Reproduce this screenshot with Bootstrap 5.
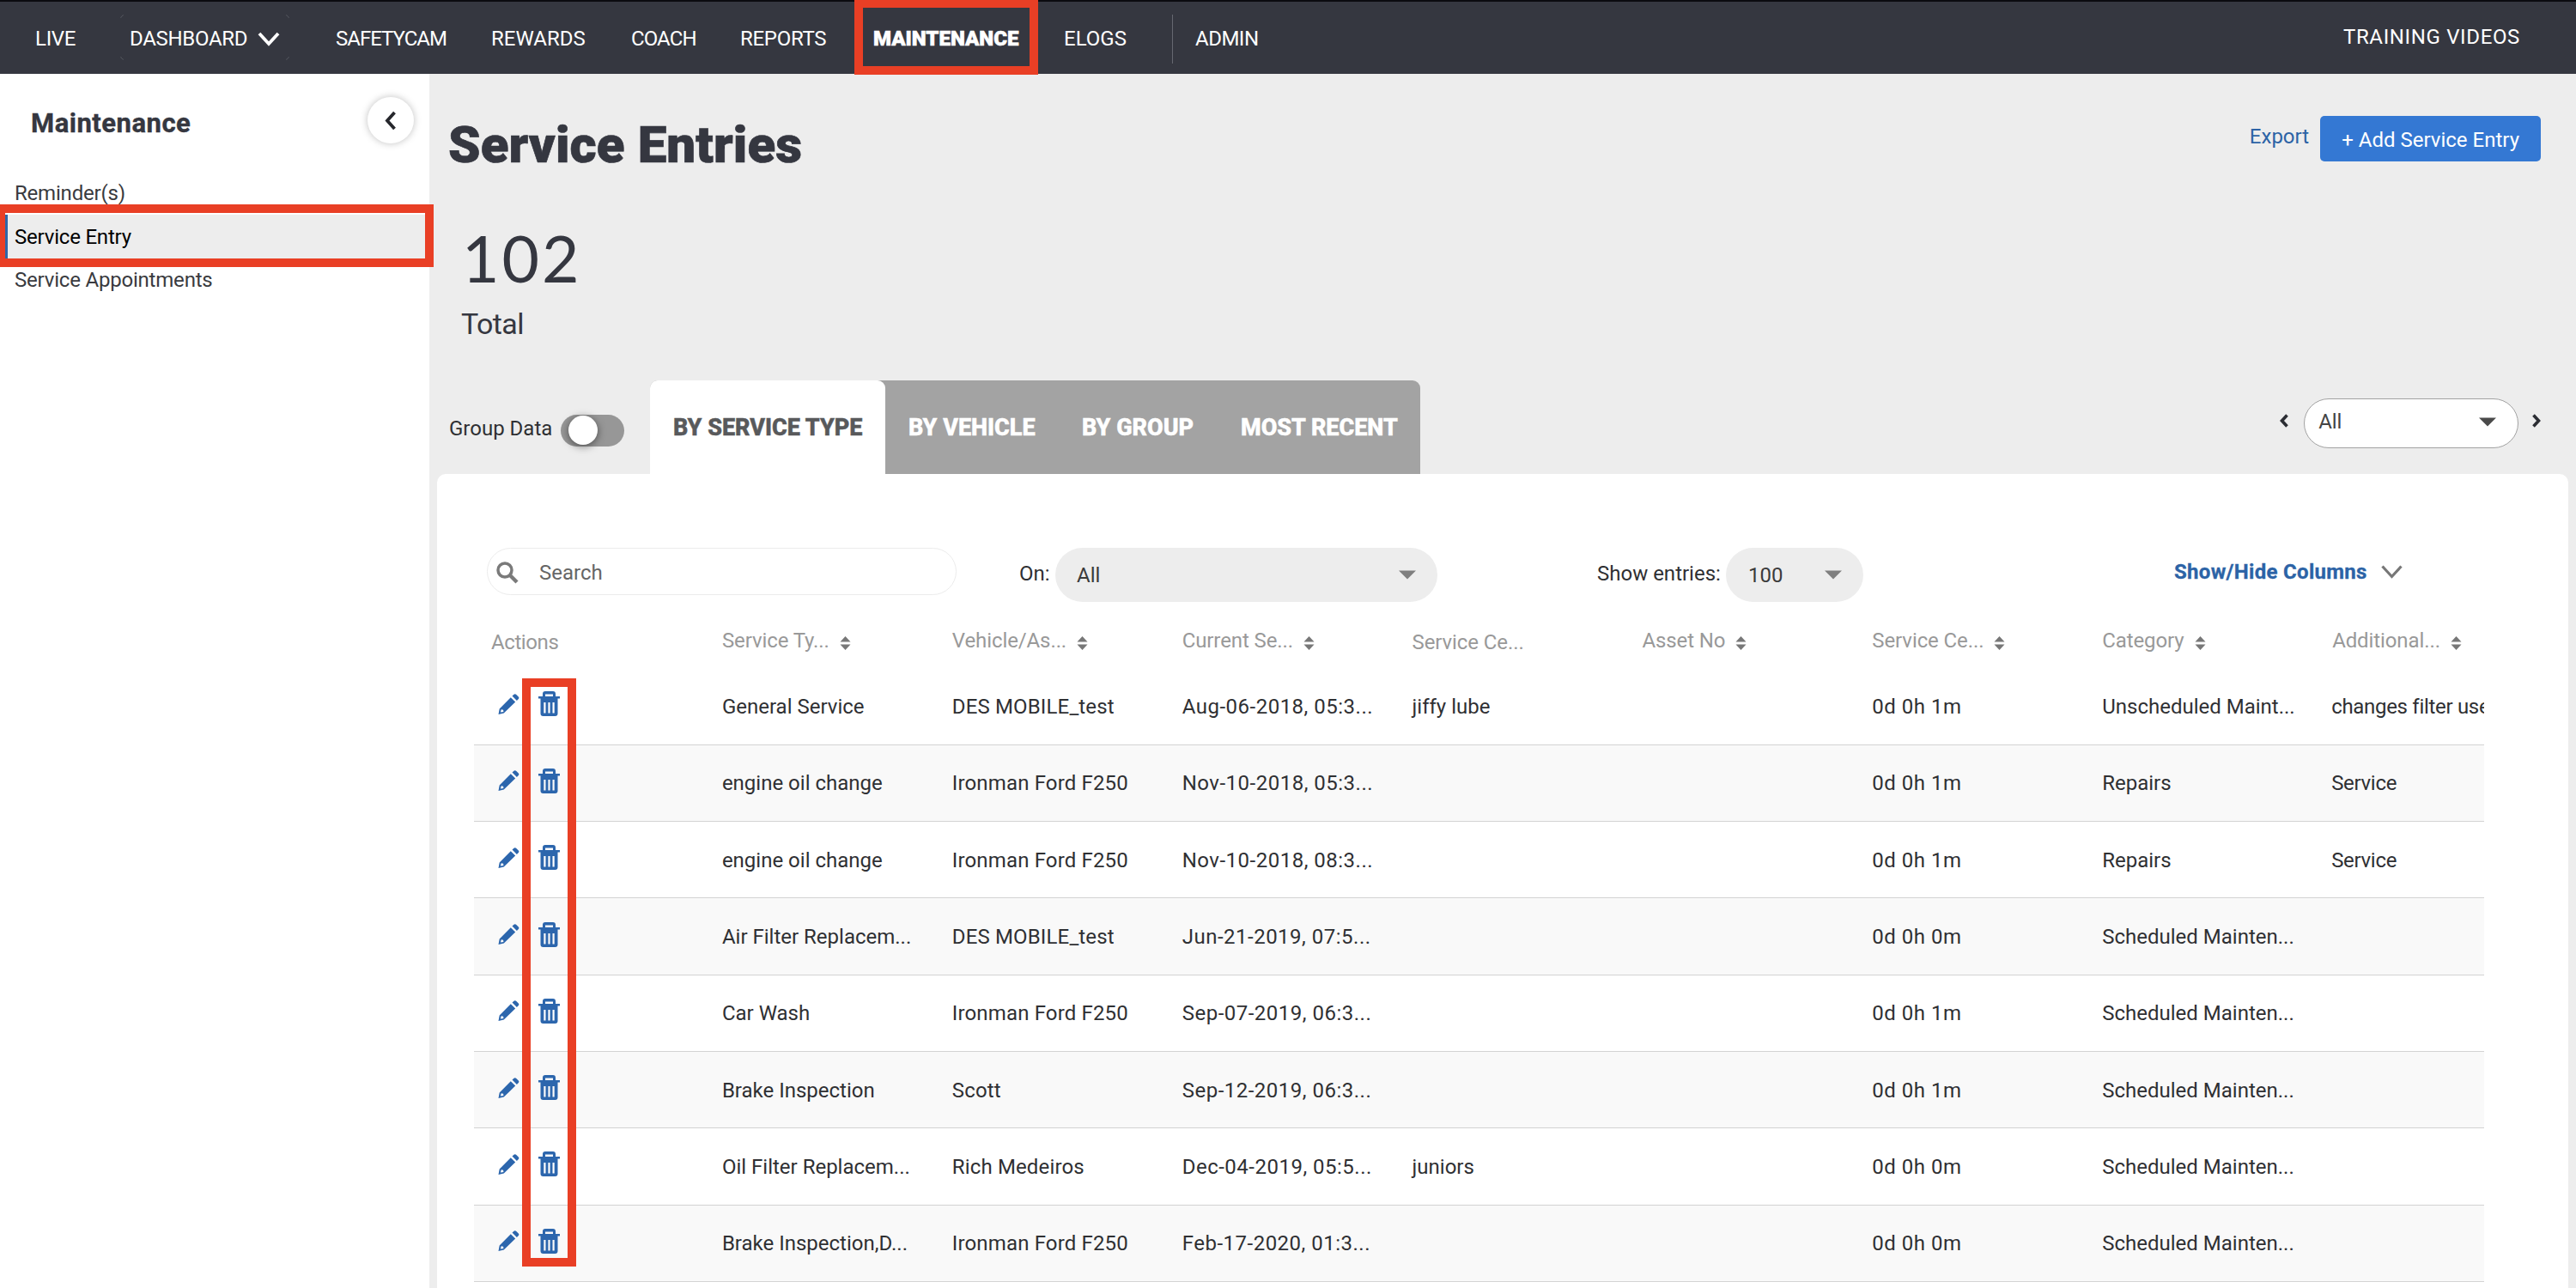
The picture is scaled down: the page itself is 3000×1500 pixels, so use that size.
<!DOCTYPE html>
<html lang="en">
<head>
<meta charset="utf-8">
<title>Service Entries</title>
<link href="https://cdn.jsdelivr.net/npm/bootstrap@5.3.0/dist/css/bootstrap.min.css" rel="stylesheet">
<style>
body{font-family:Roboto,"Liberation Sans",sans-serif;font-size:24px;line-height:30px;color:#2f3033;background:#ededed;width:3000px;height:1500px;overflow:hidden}
a{color:inherit;text-decoration:none}
svg{display:block;flex:none}
/* top navigation */
.topbar{height:86px;background:#353740;border-top:2px solid #0b0b10;color:#fff;padding:2px 0 0 41px}
.topbar .nav-item{white-space:nowrap}
.n1{width:110px;letter-spacing:-.3px}.n2{width:240px;letter-spacing:-.3px}.n3{width:181px;letter-spacing:-1px}.n4{width:163px}.n5{width:127px;letter-spacing:-.9px}.n6{width:155px;letter-spacing:-.3px}.n7{width:222px;font-weight:900;-webkit-text-stroke:.6px #fff}.n8{width:126px}.n9{letter-spacing:-.5px}
.n2 svg{margin-right:65px}
.vline{width:1px;height:57px;background:#666870;margin-right:26px}
.training{margin-right:65px;padding-bottom:4px;letter-spacing:.65px}
.dashfocus{position:absolute;left:140px;top:17px;width:197px;height:53px;border:1px solid #55575f;border-radius:5px;clip-path:polygon(0 0,4px 0,4px 4px,193px 4px,193px 0,100% 0,100% 4px,193px 4px,193px 49px,100% 49px,100% 100%,193px 100%,193px 49px,4px 49px,4px 100%,0 100%,0 49px,4px 49px,4px 4px,0 4px)}
/* highlight frames */
.redbox{position:absolute;border:10px solid #e93f25;pointer-events:none;z-index:5}
.rb-nav{left:995px;top:0;width:214px;height:87px;border-top-width:9px}
.rb-side{left:0;top:238px;width:505px;height:73px;border-left-width:6px}
.rb-trash{left:608px;top:790px;width:63px;height:685px}
/* sidebar */
.sidebar{width:500px;height:1414px;background:#fff}
.side-head{height:113px;padding:0 18px 0 36px}
.side-title{font-size:31px;font-weight:700;color:#353740;margin-top:3px;letter-spacing:.5px;-webkit-text-stroke:.4px #353740}
.collapse-btn{width:54px;height:54px;border-radius:50%;background:#fff;box-shadow:0 0 8px rgba(0,0,0,.25);margin-top:-5px}
.collapse-btn svg{margin-right:2px}
.side-link{height:51px;padding-left:17px;color:#3a3b40;letter-spacing:-.2px}
.side-link.on{background:#ededed;color:#000;border-left:9px solid #2f66a8;padding-left:8px}
.side-link:last-child{height:50px}
/* page head */
.main{padding:0 9px}
.page-head{height:176px;padding:48px 32px 0 13px}
.page-title{font-size:60px;line-height:70px;font-weight:900;color:#353740;letter-spacing:.1px;-webkit-text-stroke:.7px #353740}
.export{color:#2c63a6;margin-right:13px;line-height:48px}
.add-btn{width:257px;height:53px;border-radius:5px;background:#3478d3;border:0;color:#fff;font-size:24px;line-height:30px;padding:3px 0 0}
.head-tools{margin-top:1px}
.stat{height:181px;padding-left:28px}
.bignum{font-family:Lato,sans-serif;font-size:75px;line-height:76px;color:#353740;margin-left:1px;letter-spacing:3px}
.total{font-size:34px;line-height:42px;color:#353740;margin-top:18px;letter-spacing:-.6px}
/* tab row */
.tabrow{height:109px;padding:0 32px 0 14px}
.gd{width:130px;padding-top:41px;white-space:nowrap}
.toggle-sw{width:74px;height:37px;border-radius:19px;background:#979797;padding:1px 0 0 9px;margin:40px 30px 0 0}
.toggle-sw i{display:block;width:34px;height:34px;border-radius:50%;background:#fff;box-shadow:0 2px 10px rgba(0,0,0,.5)}
.tabs{height:109px;background:#a3a3a3;border-radius:9px 9px 0 0;font-size:27px;font-weight:800;color:#fff;width:897px;-webkit-text-stroke:.5px currentColor}
.tabs div{padding-left:27px;white-space:nowrap}
.tabs .t1{width:274px;background:#fff;color:#58595b;border-radius:9px 9px 0 0;height:109px}
.t2{width:202px}.t3{width:185px}
.pager{width:250px;height:58px;border-radius:29px;border:1.500px solid #a2a2a2;background:#fff;color:#444;padding:0 25px 4px 16px;margin:0 16px 0 18px}
.pager-row{margin-top:21px;height:58px}
.pager-row>svg{margin-bottom:6px}
/* panel */
.panel{background:#fff;border-radius:10px 10px 0 0;height:948px;padding:86px 98px 0 43px}
.filters{height:63px;padding-left:15px;margin-right:-30px}
.searchbox{width:547px;height:55px;border:1.500px solid #ececec;border-radius:28px;color:#666;padding:2px 0 0 10px}
.searchbox span{margin-left:24px}
.pill{height:63px;border-radius:32px;background:#ededed;padding:0 25px;color:#3b3b3b}
.pill svg{color:#7f7f7f}
.pager svg{color:#4a4a4a}
.on-label{width:42px;margin:15px 0 0 73px}
.show-label{width:150px;margin:15px 0 0 186px;white-space:nowrap}
.w-on{width:445px}.w-show{width:160px;padding-left:26px}
.cols-link{font-weight:700;color:#2c63a6;margin:13px 0 0 362px;letter-spacing:.3px;white-space:nowrap;-webkit-text-stroke:.3px #2c63a6}
table.entries{table-layout:fixed;width:2341px;margin:0;line-height:30px}
.entries th{height:77px;padding:12px 0 0 21px;font-weight:400;color:#999;white-space:nowrap;vertical-align:middle;border:0;background:#fff;width:267.900px;letter-spacing:-.1px}
.entries th:last-child{width:198px}
.entries th svg{margin:6px 0 0 12px}
.entries .plain{padding-top:17px}
.entries .plain:first-child{padding-left:20px;letter-spacing:-.4px}
.entries td{height:89.300px;padding:1px 0 0 21px;white-space:nowrap;overflow:hidden;vertical-align:middle;border-bottom:1px solid #d3d3d3;color:#2f3033;background:#fff}
.entries td:nth-child(3){letter-spacing:.15px}
.entries td:nth-child(4),.entries td:nth-child(7){letter-spacing:.5px}
.entries td:last-child{padding-left:20px;letter-spacing:-.3px}
.entries tbody tr:nth-child(even) td{background:#f9f9f9}
.acts{color:#2c66ad;padding:0 0 6px 7px;gap:22px}
</style>
</head>
<body class="position-relative">
<svg width="0" height="0" class="position-absolute">
<symbol id="pen" viewBox="0 0 24 24"><path fill="currentColor" fill-rule="evenodd" d="M14.300 4.200l5.400 5.400L6.300 22.600 0 24l1.200-6.500zM3.200 18.200l-.8 3.400 3.500-.7-.3-2.100zM16 2.600l1.700-1.700a2.200 2.200 0 0 1 3.100 0l2.300 2.300a2.200 2.200 0 0 1 0 3.100L21.400 8z"/></symbol>
<symbol id="bin" viewBox="0 0 25 29"><path fill="currentColor" fill-rule="evenodd" d="M0 6h5V3q0-3 3-3h9q3 0 3 3v3h5v2.500h-2.500V26q0 3-3 3h-14q-3 0-3-3V8.500H0zM8 6h9V3.500H8zM6.300 13v12.500h2.200V13zm5.100 0v12.500h2.200V13zm5.100 0v12.500h2.200V13z"/></symbol>
<symbol id="sort" viewBox="0 0 13 16"><path fill="#777" d="M6.500 0L12.500 6.500H.5zM6.500 16L.5 9.500h12z"/></symbol>
<symbol id="caret" viewBox="0 0 20 10"><path fill="currentColor" d="M0 0h20L10 10z"/></symbol>
</svg>

<nav class="topbar d-flex align-items-center">
<div class="nav-item n1">LIVE</div>
<div class="nav-item n2 d-flex align-items-center"><span>DASHBOARD</span><svg class="ms-auto" width="26" height="17" viewBox="0 0 26 17"><path d="M2 2l11 12L24 2" fill="none" stroke="#fff" stroke-width="3.800"/></svg></div>
<div class="nav-item n3">SAFETYCAM</div>
<div class="nav-item n4">REWARDS</div>
<div class="nav-item n5">COACH</div>
<div class="nav-item n6">REPORTS</div>
<div class="nav-item n7">MAINTENANCE</div>
<div class="nav-item n8">ELOGS</div>
<div class="vline"></div>
<div class="nav-item n9">ADMIN</div>
<div class="nav-item training ms-auto">TRAINING VIDEOS</div>
</nav>

<div class="d-flex">
<aside class="sidebar flex-shrink-0">
<div class="side-head d-flex align-items-center justify-content-between">
<div class="side-title">Maintenance</div>
<div class="collapse-btn d-flex align-items-center justify-content-center"><svg width="15" height="23" viewBox="0 0 15 23"><path d="M12.500 2L4 11.500l8.500 9.500" fill="none" stroke="#26272c" stroke-width="3.800"/></svg></div>
</div>
<a class="side-link d-flex align-items-center">Reminder(s)</a>
<a class="side-link on d-flex align-items-center">Service Entry</a>
<a class="side-link d-flex align-items-center">Service Appointments</a>
</aside>

<main class="main flex-grow-1">
<header class="page-head d-flex justify-content-between align-items-start">
<h1 class="page-title mb-0">Service Entries</h1>
<div class="head-tools d-flex align-items-start"><a class="export">Export</a><button class="btn add-btn">+ Add Service Entry</button></div>
</header>
<div class="stat"><div class="bignum">102</div><div class="total">Total</div></div>
<div class="tabrow d-flex align-items-start">
<div class="gd">Group Data</div>
<div class="toggle-sw"><i></i></div>
<div class="tabs d-flex align-items-center"><div class="t1 d-flex align-items-center">BY SERVICE TYPE</div><div class="t2">BY VEHICLE</div><div class="t3">BY GROUP</div><div>MOST RECENT</div></div>
<div class="pager-row d-flex align-items-center ms-auto">
<svg width="10" height="16" viewBox="0 0 10 16"><path d="M8.500 1.500L2.500 8l6 6.500" fill="none" stroke="#2b2d33" stroke-width="3.600"/></svg>
<div class="pager d-flex align-items-center justify-content-between"><span>All</span><svg width="20" height="11"><use href="#caret"/></svg></div>
<svg width="10" height="16" viewBox="0 0 10 16"><path d="M1.500 1.500L7.500 8l-6 6.500" fill="none" stroke="#2b2d33" stroke-width="3.600"/></svg>
</div>
</div>

<section class="panel">
<div class="filters d-flex align-items-start">
<div class="searchbox d-flex align-items-center"><svg width="26" height="26" viewBox="0 0 26 26"><circle cx="10" cy="10" r="8" fill="none" stroke="#7a7a7a" stroke-width="3.500"/><path d="M16 16l8 8" stroke="#7a7a7a" stroke-width="4.500"/></svg><span>Search</span></div>
<div class="on-label">On:</div>
<div class="pill w-on d-flex align-items-center justify-content-between"><span>All</span><svg width="20" height="11"><use href="#caret"/></svg></div>
<div class="show-label">Show entries:</div>
<div class="pill w-show d-flex align-items-center justify-content-between"><span>100</span><svg width="20" height="11"><use href="#caret"/></svg></div>
<a class="cols-link d-flex align-items-center">Show/Hide Columns<svg class="ms-3" width="25" height="16" viewBox="0 0 25 16"><path d="M1.500 1.500l11 12 11-12" fill="none" stroke="#777" stroke-width="3.200"/></svg></a>
</div>

<table class="table entries">
<thead><tr>
<th class="plain">Actions</th>
<th><div class="d-flex align-items-center">Service Ty...<svg width="13" height="16"><use href="#sort"/></svg></div></th>
<th><div class="d-flex align-items-center">Vehicle/As...<svg width="13" height="16"><use href="#sort"/></svg></div></th>
<th><div class="d-flex align-items-center">Current Se...<svg width="13" height="16"><use href="#sort"/></svg></div></th>
<th class="plain">Service Ce...</th>
<th><div class="d-flex align-items-center">Asset No<svg width="13" height="16"><use href="#sort"/></svg></div></th>
<th><div class="d-flex align-items-center">Service Ce...<svg width="13" height="16"><use href="#sort"/></svg></div></th>
<th><div class="d-flex align-items-center">Category<svg width="13" height="16"><use href="#sort"/></svg></div></th>
<th><div class="d-flex align-items-center">Additional...<svg width="13" height="16"><use href="#sort"/></svg></div></th>
</tr></thead>
<tbody>
<tr><td><div class="acts d-flex align-items-center"><svg width="25" height="24"><use href="#pen"/></svg><svg width="25" height="29"><use href="#bin"/></svg></div></td><td>General Service</td><td>DES MOBILE_test</td><td>Aug-06-2018, 05:3...</td><td>jiffy lube</td><td></td><td>0d 0h 1m</td><td>Unscheduled Maint...</td><td>changes filter use</td></tr>
<tr><td><div class="acts d-flex align-items-center"><svg width="25" height="24"><use href="#pen"/></svg><svg width="25" height="29"><use href="#bin"/></svg></div></td><td>engine oil change</td><td>Ironman Ford F250</td><td>Nov-10-2018, 05:3...</td><td></td><td></td><td>0d 0h 1m</td><td>Repairs</td><td>Service</td></tr>
<tr><td><div class="acts d-flex align-items-center"><svg width="25" height="24"><use href="#pen"/></svg><svg width="25" height="29"><use href="#bin"/></svg></div></td><td>engine oil change</td><td>Ironman Ford F250</td><td>Nov-10-2018, 08:3...</td><td></td><td></td><td>0d 0h 1m</td><td>Repairs</td><td>Service</td></tr>
<tr><td><div class="acts d-flex align-items-center"><svg width="25" height="24"><use href="#pen"/></svg><svg width="25" height="29"><use href="#bin"/></svg></div></td><td>Air Filter Replacem...</td><td>DES MOBILE_test</td><td>Jun-21-2019, 07:5...</td><td></td><td></td><td>0d 0h 0m</td><td>Scheduled Mainten...</td><td></td></tr>
<tr><td><div class="acts d-flex align-items-center"><svg width="25" height="24"><use href="#pen"/></svg><svg width="25" height="29"><use href="#bin"/></svg></div></td><td>Car Wash</td><td>Ironman Ford F250</td><td>Sep-07-2019, 06:3...</td><td></td><td></td><td>0d 0h 1m</td><td>Scheduled Mainten...</td><td></td></tr>
<tr><td><div class="acts d-flex align-items-center"><svg width="25" height="24"><use href="#pen"/></svg><svg width="25" height="29"><use href="#bin"/></svg></div></td><td>Brake Inspection</td><td>Scott</td><td>Sep-12-2019, 06:3...</td><td></td><td></td><td>0d 0h 1m</td><td>Scheduled Mainten...</td><td></td></tr>
<tr><td><div class="acts d-flex align-items-center"><svg width="25" height="24"><use href="#pen"/></svg><svg width="25" height="29"><use href="#bin"/></svg></div></td><td>Oil Filter Replacem...</td><td>Rich Medeiros</td><td>Dec-04-2019, 05:5...</td><td>juniors</td><td></td><td>0d 0h 0m</td><td>Scheduled Mainten...</td><td></td></tr>
<tr><td><div class="acts d-flex align-items-center"><svg width="25" height="24"><use href="#pen"/></svg><svg width="25" height="29"><use href="#bin"/></svg></div></td><td>Brake Inspection,D...</td><td>Ironman Ford F250</td><td>Feb-17-2020, 01:3...</td><td></td><td></td><td>0d 0h 0m</td><td>Scheduled Mainten...</td><td></td></tr>
</tbody>
</table>
</section>
</main>
</div>

<div class="dashfocus"></div>
<div class="redbox rb-nav"></div>
<div class="redbox rb-side"></div>
<div class="redbox rb-trash"></div>
</body>
</html>
